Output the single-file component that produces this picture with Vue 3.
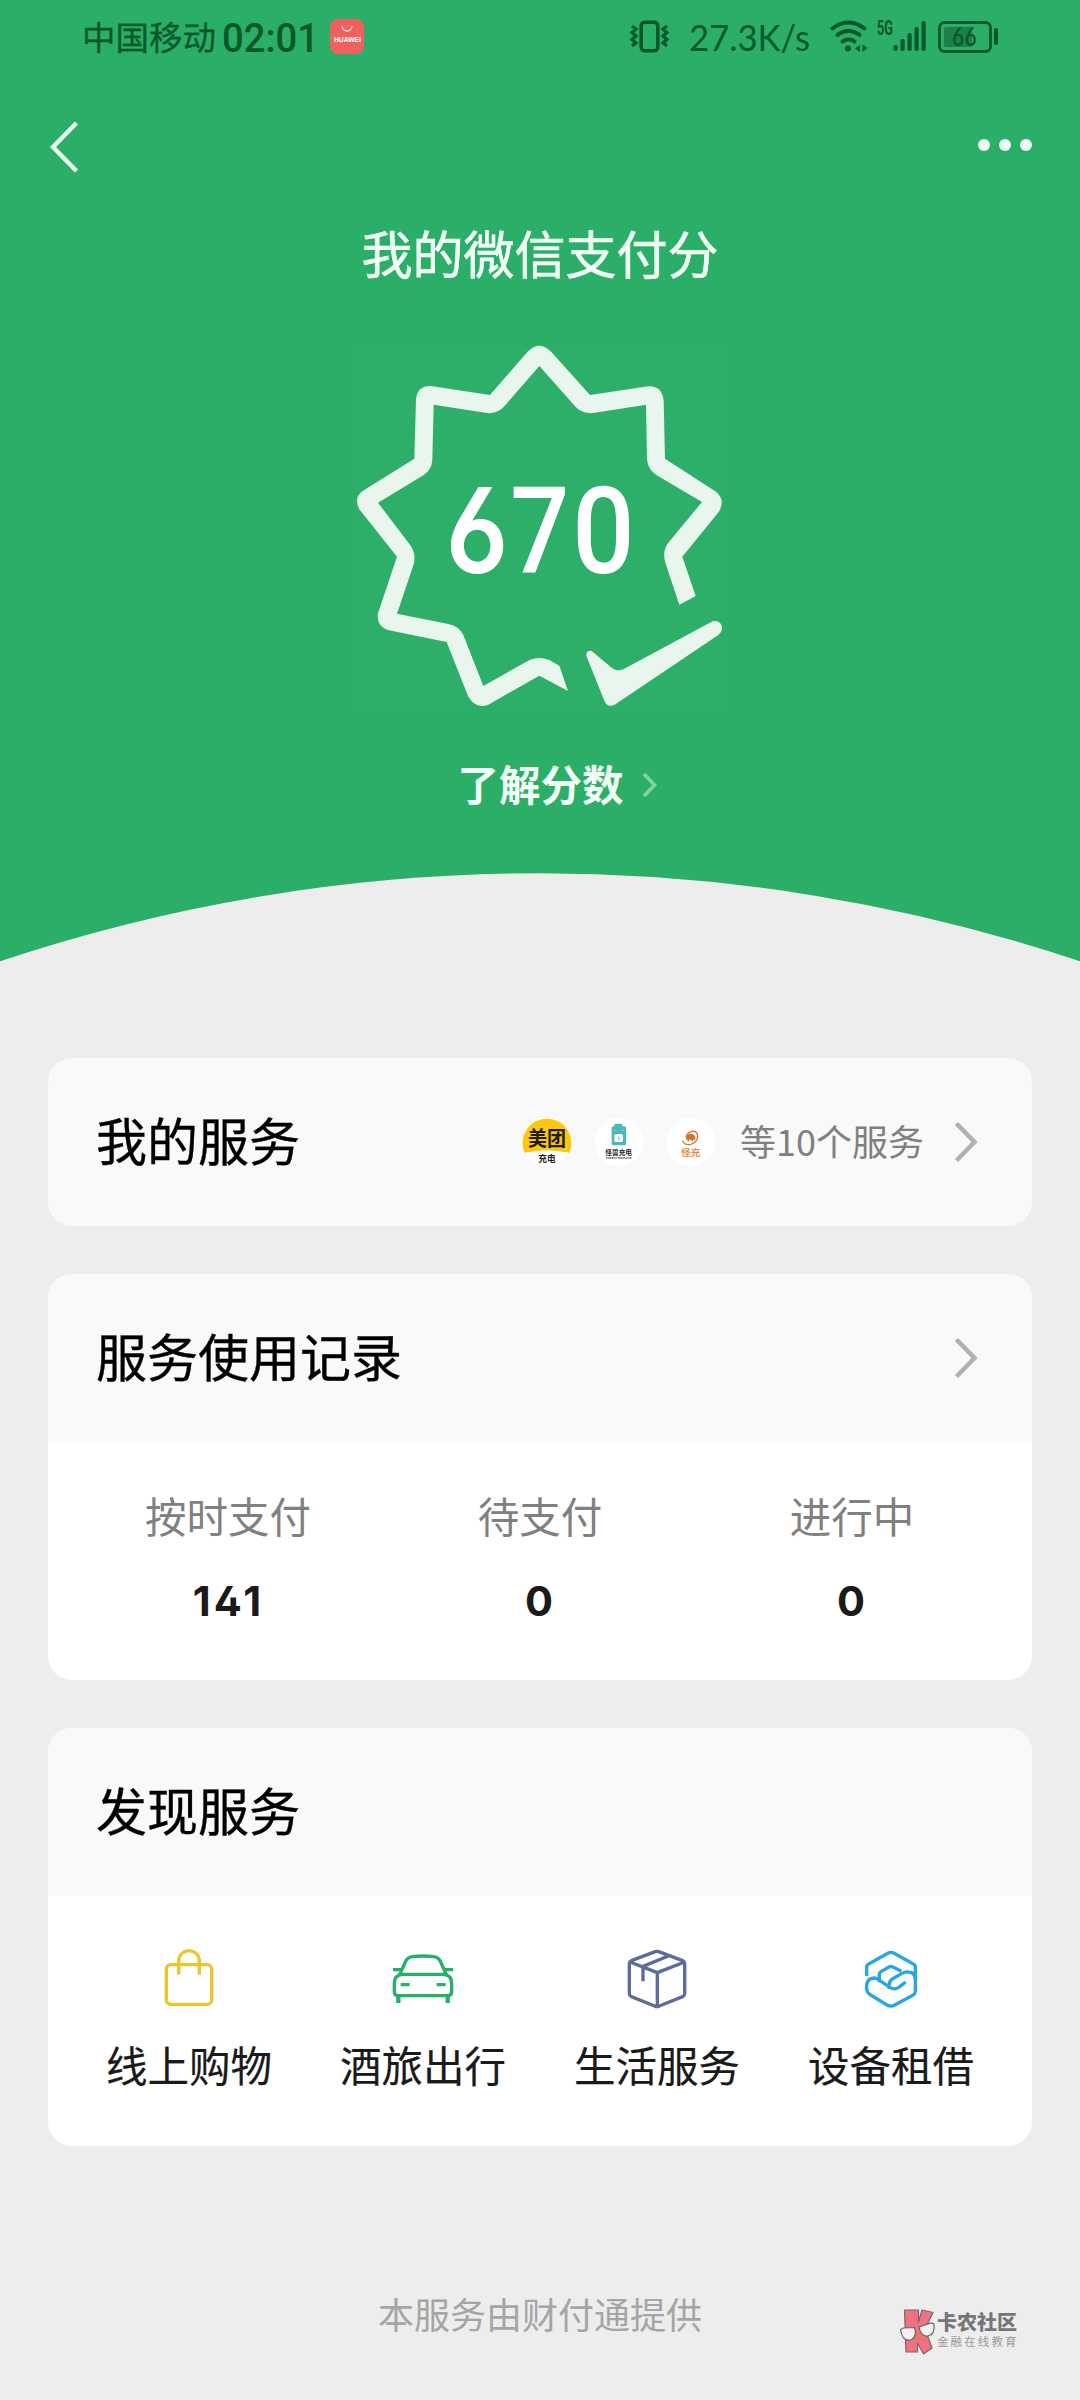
<script setup>
const stats = [
  { label: '按时支付', value: '141' },
  { label: '待支付', value: '0' },
  { label: '进行中', value: '0' },
]
const bars = [6, 12, 18, 24, 30]
</script>

<template>
  <div class="page">
    <header class="hero">
      <div class="status">
        <span class="carrier">中国移动</span>
        <svg class="clock" width="97" height="50" viewBox="0 -5 97 50"><text x="0" y="34.5" textLength="97" lengthAdjust="spacingAndGlyphs">02:01</text></svg>
        <svg class="huawei" width="34" height="36" viewBox="0 0 34 36">
          <rect width="34" height="35" rx="8" fill="#f0605f" />
          <path d="M12 7a5 5 0 0 0 10 0" fill="none" stroke="#ffd5cf" stroke-width="1.3" />
          <text x="4" y="22.5" textLength="27" lengthAdjust="spacingAndGlyphs">HUAWEI</text>
        </svg>
        <div class="status-right">
          <svg class="vibrate" width="40" height="34" viewBox="0 0 40 34" fill="none" stroke="#07582a">
            <rect x="11.2" y="2.2" width="16.6" height="28.6" rx="3.5" stroke-width="3.6" />
            <path d="M2 6l4 3-4 3.5 4 3.5-4 3.5 4 3.5-4 3M37 6l-4 3 4 3.5-4 3.5 4 3.5-4 3.5 4 3" stroke-width="3.2" />
          </svg>
          <svg class="speed" width="121" height="50" viewBox="0 -5 121 50"><text x="0" y="34" textLength="121" lengthAdjust="spacingAndGlyphs">27.3K/s</text></svg>
          <svg class="wifi" width="39" height="34" viewBox="0 0 39 34">
            <g fill="none" stroke="#07582a" stroke-width="4" stroke-linecap="round">
              <path d="M2.5 8.5a24 24 0 0 1 32 0M7.5 15a17 17 0 0 1 22 0M12.5 21.5a10 10 0 0 1 12 0" />
            </g>
            <path d="M18 25.500a3 3 0 1 1 0 6 3 3 0 1 1 0-6zM30 25v7l-5-3.500zM32.500 24.500v7.500l5-4z" fill="#07582a" />
          </svg>
          <svg class="signal" width="50" height="44" viewBox="0 -5 50 44" fill="#07582a">
            <text x="0" y="14.5" textLength="16" lengthAdjust="spacingAndGlyphs">5G</text>
            <rect v-for="(h, i) in bars" :key="h" :x="16.5 + i * 7" :y="31 - h" width="4.2" :height="h" rx="1.8" />
          </svg>
          <svg class="battery" width="61" height="34" viewBox="0 0 61 34">
            <rect x="1.5" y="2.5" width="51" height="29" rx="5" fill="none" stroke="#07582a" stroke-width="2.8" />
            <rect x="6" y="7" width="28" height="20" rx="2" fill="#1b8148" />
            <rect x="56" y="8" width="4" height="17" rx="2" fill="#07582a" />
            <text x="14" y="25.5" textLength="25" lengthAdjust="spacingAndGlyphs">66</text>
          </svg>
        </div>
      </div>

      <nav class="nav">
        <svg width="30" height="54" viewBox="0 0 30 54"><path d="M26.5 3L3 27l23.5 24" fill="none" stroke="#eafff2" stroke-width="4.4" /></svg>
        <svg class="dots" width="54" height="12" viewBox="0 0 54 12" fill="#eefbf3"><circle cx="6" cy="6" r="6" /><circle cx="27" cy="6" r="6" /><circle cx="48" cy="6" r="6" /></svg>
      </nav>

      <h1 class="title">我的微信支付分</h1>

      <svg class="badge" viewBox="0 0 1200 1200">
        <rect x="42" y="45" width="1116" height="1088" fill="#2eaf69" />
        <path fill="#e9f6ee" d="M1067 798L1027 680L1136 546Q1158 510 1128 485L975 386L971 212Q966 167 925 169L750 195L632 64Q598 30 564 64L450 195L272 168Q232 167 228 208L223 386L68 483Q40 503 58 538L171 680L114 850Q108 888 143 900L320 936L384 1098Q405 1138 445 1124L598 1037L684 1083L658 1007L628 990Q598 978 570 989L430 1068L370 915Q357 888 325 882L171 851L222 700Q228 670 211 646L114 518L250 436Q275 420 277 390L281 224L440 249Q470 252 490 232L598 108L708 232Q728 252 760 249L918 224L921 390Q925 420 950 436L1086 516L985 638Q967 660 975 695L1018 824Z" />
        <path fill="#e9f6ee" d="M739 977Q738 960 755 963L816 1014Q830 1026 850 1018L1118 874Q1140 870 1146 890Q1148 903 1135 915L824 1124Q802 1134 793 1112Z" />
        <text class="score" y="729"><tspan class="open-digit" x="317" textLength="188" lengthAdjust="spacingAndGlyphs">6</tspan><tspan x="511" textLength="177" lengthAdjust="spacingAndGlyphs">7</tspan><tspan x="697" textLength="187" lengthAdjust="spacingAndGlyphs">0</tspan></text>
      </svg>

      <div class="learn">
        <span>了解分数</span>
        <svg width="15" height="26" viewBox="0 0 15 26"><path d="M2 2l10.5 11L2 24" fill="none" stroke="#82d3a4" stroke-width="3.6" /></svg>
      </div>

      <svg class="arc" width="1080" height="90" viewBox="0 0 1080 90"><path d="M0 90V89.3A1701 1701 0 0 1 1080 89.3V90Z" fill="#ededed" /></svg>
    </header>

    <main class="cards">
      <section class="card">
        <div class="head">
          <h2>我的服务</h2>
          <div class="brands">
            <svg width="50" height="50" viewBox="0 0 150 150">
              <circle cx="75" cy="75" r="73" fill="#fff" />
              <path d="M8 107A73 73 0 1 1 142 107Q75 92 8 107Z" fill="#fdc70c" />
              <text x="18" y="87" font-size="60" font-weight="700" textLength="114" lengthAdjust="spacingAndGlyphs" fill="#201a16">美团</text>
              <text x="49" y="136" font-size="26" font-weight="700" fill="#222">充电</text>
            </svg>
            <svg width="50" height="50" viewBox="0 0 150 150">
              <circle cx="75" cy="75" r="73" fill="#fff" />
              <path d="M61 28v-5q0-3 4-3h16q4 0 4 3v5h6q5 0 5 5v47q0 5-5 5H58q-5 0-5-5V33q0-5 5-5z" fill="#48b8b8" />
              <rect x="61" y="51" width="26" height="24" rx="5" fill="#fff" />
              <path d="M63 38v5M86 38v5" stroke="#dff6f5" stroke-width="2" fill="none" />
              <path d="M75 56l-4 8h6l-4 8" stroke="#48b8b8" stroke-width="2" fill="none" />
              <text x="34" y="113" font-size="20" font-weight="700" fill="#252525">怪兽充电</text>
              <text x="36" y="127" font-size="6" font-weight="700" textLength="76" lengthAdjust="spacingAndGlyphs" fill="#333">ENERGY MONSTER</text>
            </svg>
            <svg width="50" height="50" viewBox="0 0 150 150">
              <circle cx="75" cy="75" r="73" fill="#fff" />
              <path d="M50 72q7 14 24 10 21-6 21-24-1-17-17-15-14 3-18 17" fill="none" stroke="#cf7a30" stroke-width="4" stroke-linecap="round" />
              <path d="M62 66q2-14 12-14 12 0 12 14zM67 66v7M79 66v7" fill="#d96f20" stroke="#d96f20" stroke-width="4" />
              <text x="45" y="117" font-size="29" font-weight="500" fill="#dc7d32">怪充</text>
            </svg>
          </div>
          <span class="count">等10个服务</span>
          <svg class="chev" width="24" height="42" viewBox="0 0 24 42"><path d="M2.5 2.5L20.5 21 2.5 39.5" fill="none" stroke="#b1b1b1" stroke-width="4.6" /></svg>
        </div>
      </section>

      <section class="card">
        <div class="head">
          <h2>服务使用记录</h2>
          <svg class="chev" width="24" height="42" viewBox="0 0 24 42"><path d="M2.5 2.5L20.5 21 2.5 39.5" fill="none" stroke="#b1b1b1" stroke-width="4.6" /></svg>
        </div>
        <div class="stats">
          <div v-for="s in stats" :key="s.label" class="stat">
            <span class="stat-label">{{ s.label }}</span>
            <span class="stat-value">{{ s.value }}</span>
          </div>
        </div>
      </section>

      <section class="card">
        <div class="head"><h2>发现服务</h2></div>
        <div class="discover">
          <div class="entry">
            <svg viewBox="189 66 216 216" stroke="#efc52e">
              <rect x="229" y="134" width="136" height="119" rx="13" />
              <path d="M266 164v-41a31 31 0 0 1 62 0v41" />
            </svg>
            <span>线上购物</span>
          </div>
          <div class="entry">
            <svg viewBox="891 66 216 216" stroke="#27b06a">
              <path d="M929 164l17-38q6-14 21-16 32-4 64 0 15 2 21 16l17 38M909 149h25M1064 149h25" />
              <path d="M937 163h124q24 2 24 27v25q0 12-12 12H925q-12 0-12-12v-25q0-25 24-27zM932 194h27M1040 194h27" />
              <path d="M925 227v22M1073 227v22" stroke-width="13" />
            </svg>
            <span>酒旅出行</span>
          </div>
          <div class="entry">
            <svg viewBox="213 66 216 216" stroke="#5d6c9a">
              <path d="M316 95q5-2 10 0l72 27q6 3 6 9v90q0 6-6 9l-70 28q-7 4-14 0l-70-28q-6-3-6-9v-90q0-6 6-9zM240 126l82 32 82-32M322 158v102M355 108l-76 31v45" />
            </svg>
            <span>生活服务</span>
          </div>
          <div class="entry">
            <svg viewBox="915 66 216 216" stroke="#2aa5e4">
              <path d="M950 168v-26q0-7 6-10l59-33q8-4 16 0l59 33q6 3 6 10v72q0 7-6 11l-57 31q-10 5-20 0l-51-31q-12-7-12-21v-9q2-20 22-21 7 0 14 5l32 22q14 10 27 2l22-17" />
              <path d="M988 187v-24q0-5 5-8l24-14q6-3 12 0l25 13" />
              <path d="M1017 207v-11q0-12 10-19l29-17q10-6 20-4 20 2 20 22" />
            </svg>
            <span>设备租借</span>
          </div>
        </div>
      </section>
    </main>

    <footer class="foot">本服务由财付通提供</footer>

    <div class="mark">
      <svg width="36" height="50" viewBox="0 0 36 50">
        <g fill="#f1717f" stroke="#7b6668" stroke-width="1.2" stroke-linejoin="round">
          <path d="M5.5 2h14v12l3.5-12 11 2.5-8 16.500 7 19-8.500 6-6-11v9H7z" />
        </g>
        <g fill="#f3f0f0" stroke="#6b6566" stroke-width="1.2"><path d="M1.5 21.500l3-1.500 11-.5q3 8-3 12-9 3-11-10z" /><path d="M20 19l12-4 3 1q1 11-6 12-7 1-9-9z" /></g>
      </svg>
      <div class="mark-text"><b>卡农社区</b><span>金融在线教育</span></div>
    </div>
  </div>
</template>

<style>
body { margin: 0; background: #ededed; }
</style>

<style scoped>
.page {
  position: relative;
  width: 1080px;
  height: 2400px;
  overflow: hidden;
  display: flex;
  flex-direction: column;
  background: #ededed;
  font-family: "Noto Sans CJK SC", sans-serif;
  color: #000;
}
svg { display: block; flex: none; overflow: visible; }
.hero { height: 962px; flex: none; display: flex; flex-direction: column; background: #2bae67; }
.status { height: 74px; display: flex; align-items: center; padding: 0 81px 0 82px; color: #07582a; }
.carrier { font-size: 33.5px; line-height: 50px; margin-top: -3px; width: 136px; white-space: nowrap; -webkit-text-stroke: 0.3px; }
.clock { margin-left: 4px; }
.clock text { font: 500 40px Roboto, sans-serif; fill: #07582a; }
.huawei { margin-left: 11px; }
.huawei text { font: 700 6.5px "Liberation Sans", sans-serif; fill: #fff; }
.status-right { display: flex; align-items: center; margin-left: auto; }
.speed { margin: 0 0 0 19px; }
.speed text { font: 400 36px Lato, sans-serif; fill: #07582a; }
.wifi { margin-left: 20px; }
.signal { margin-left: 8px; }
.signal text { font: 700 21px Roboto, sans-serif; }
.battery { margin-left: 11px; }
.battery text { font: 500 25px Inter, sans-serif; font-feature-settings: "cv03"; fill: #07582a; }
.nav { height: 146px; display: flex; align-items: center; justify-content: space-between; padding: 0 48px 0 50px; }
.dots { margin-bottom: 4px; }
.title { margin: 0; height: 64px; line-height: 64px; font-size: 51px; font-weight: 400; text-align: center; color: #f2fff7; -webkit-text-stroke: 0.7px; }
.badge { width: 400px; height: 400px; margin: 46px auto 0; }
.score { font: 500 362px Roboto, sans-serif; fill: #fff; }
.score .open-digit { font: 600 354px Inter, sans-serif; font-feature-settings: "cv03"; }
.learn { height: 60px; margin-top: 23px; display: flex; align-items: center; justify-content: center; gap: 18px; padding-left: 34px; font-size: 41.5px; font-weight: 700; line-height: 60px; color: #f2fff7; }
.learn svg { margin-top: 4px; }
.arc { margin-top: auto; }
.cards { margin: 96px 48px 0; display: flex; flex-direction: column; gap: 48px; }
.card { border-radius: 24px; overflow: hidden; background: #fff; }
.head { height: 168px; box-sizing: border-box; display: flex; align-items: center; padding: 0 54px 0 48px; background: #f9f9f9; }
.head h2 { margin: 0 auto 6px 0; font-size: 51px; line-height: 74px; font-weight: 400; -webkit-text-stroke: 0.35px; }
.brands { display: flex; gap: 22px; margin-bottom: 1px; }
.count { margin: 0 0 4px 24px; width: 187px; font-size: 36px; line-height: 52px; color: #808080; white-space: nowrap; }
.chev { margin-left: 27px; }
.stats { height: 238px; display: flex; padding: 0 24px; }
.stat { flex: 1; display: flex; flex-direction: column; align-items: center; padding-top: 44px; }
.stat-label { font-size: 41.5px; line-height: 58px; color: #808080; }
.stat-value { margin-top: 28px; font: 700 41.5px/58px Inter, sans-serif; font-feature-settings: "cv02"; letter-spacing: 3px; text-indent: 1px; color: #1a1a1a; }
.discover { height: 250px; display: flex; padding: 0 24px; }
.entry { flex: 1; display: flex; flex-direction: column; align-items: center; padding-top: 46px; font-size: 41.5px; line-height: 58px; color: #1a1a1a; }
.entry svg { width: 72px; height: 72px; fill: none; stroke-width: 10; stroke-linejoin: round; }
.entry span { margin-top: 21px; -webkit-text-stroke: 0.2px; }
.foot { margin-top: 141px; text-align: center; font-size: 36px; line-height: 52px; color: #a5a5a5; }
.mark { position: absolute; left: 899px; top: 2308px; display: flex; color: #767676; }
.mark-text { display: flex; flex-direction: column; padding: 2px 0 0 2px; white-space: nowrap; }
.mark-text b { font-size: 20px; line-height: 24px; font-weight: 900; }
.mark-text span { font-size: 11.5px; line-height: 14px; letter-spacing: 2.1px; color: #9a9a9a; }
</style>
